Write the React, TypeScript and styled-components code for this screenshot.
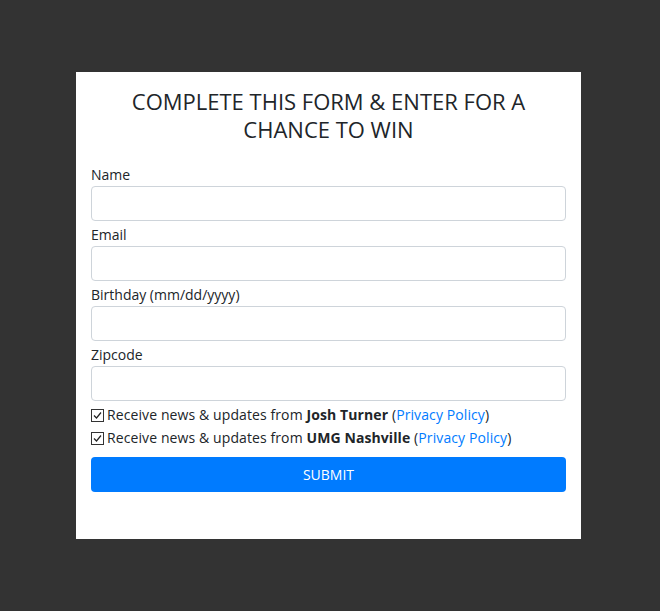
import styled, { createGlobalStyle } from 'styled-components';

const GlobalStyle = createGlobalStyle`
  html, body {
    margin: 0;
    padding: 0;
    background: #333333;
  }
  body {
    font-family: 'Open Sans', 'Noto Sans', sans-serif;
    color: #212529;
  }
`;

const Page = styled.div`
  width: 660px;
  height: 611px;
  padding: 72px 0 0 76px;
  box-sizing: border-box;
`;

const Card = styled.div`
  width: 505px;
  height: 467px;
  background: #ffffff;
  padding: 15px 15px 0;
  box-sizing: border-box;
`;

const Title = styled.h1`
  margin: 0 0 20px;
  font-size: 22px;
  font-weight: 400;
  line-height: 28px;
  text-align: center;
  padding: 0 30px;
`;

const Field = styled.div`
  display: flex;
  flex-direction: column;
  margin-bottom: 2px;
`;

const Label = styled.label`
  font-size: 14px;
  line-height: 21px;
  margin-bottom: 1px;
  padding-top: 1px;
`;

const Input = styled.input`
  height: 35px;
  box-sizing: border-box;
  border: 1px solid #ced4da;
  border-radius: 4px;
  padding: 6px 12px;
  font: inherit;
  font-size: 14px;
  outline: none;
`;

const CheckRow = styled.label`
  display: flex;
  align-items: center;
  font-size: 14px;
  line-height: 23px;
  white-space: nowrap;
  letter-spacing: 0.1px;
`;

const Box = styled.span`
  width: 13px;
  height: 13px;
  box-sizing: border-box;
  border: 1px solid #333;
  margin-right: 3px;
  margin-top: 2px;
  display: inline-flex;
  align-items: center;
  justify-content: center;
  flex-shrink: 0;
`;

const Link = styled.a`
  color: #007bff;
  text-decoration: none;
`;

const Submit = styled.button`
  margin-top: 8px;
  width: 100%;
  height: 35px;
  border: none;
  border-radius: 4px;
  background: #007bff;
  color: #ffffff;
  font: inherit;
  font-size: 14px;
  text-transform: uppercase;
  cursor: pointer;
`;

const fields = ['Name', 'Email', 'Birthday (mm/dd/yyyy)', 'Zipcode'];
const optins = ['Josh Turner', 'UMG Nashville'];

function Check() {
  return (
    <Box>
      <svg width="9" height="9" viewBox="0 0 9 9">
        <path d="M1 4.5 L3.5 7 L8 1.5" fill="none" stroke="#222" strokeWidth="1.2" />
      </svg>
    </Box>
  );
}

export default function App() {
  return (
    <Page>
      <GlobalStyle />
      <Card>
        <Title>COMPLETE THIS FORM &amp; ENTER FOR A CHANCE TO WIN</Title>
        {fields.map((f) => (
          <Field key={f}>
            <Label>{f}</Label>
            <Input type="text" />
          </Field>
        ))}
        {optins.map((o) => (
          <CheckRow key={o}>
            <Check />
            <span>
              Receive news &amp; updates from <b>{o}</b> (<Link href="#">Privacy Policy</Link>)
            </span>
          </CheckRow>
        ))}
        <Submit>Submit</Submit>
      </Card>
    </Page>
  );
}
